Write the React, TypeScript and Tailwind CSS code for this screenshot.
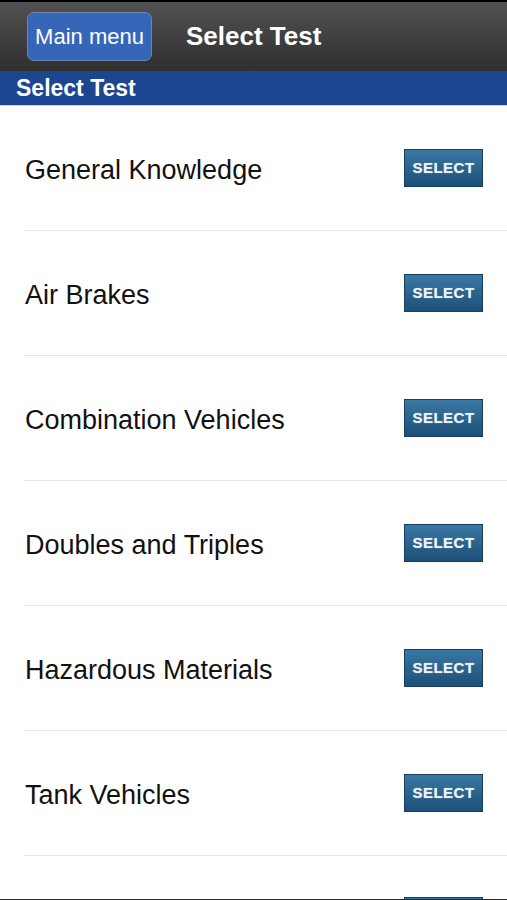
import React from 'react'

const tests = [
  'General Knowledge',
  'Air Brakes',
  'Combination Vehicles',
  'Doubles and Triples',
  'Hazardous Materials',
  'Tank Vehicles',
]

function SelectButton({ label = 'SELECT' }: { label?: string }) {
  return (
    <button className="flex h-[38px] w-[79px] shrink-0 items-center justify-center border border-[#16405f] bg-gradient-to-b from-[#3a78a3] to-[#1c5079] text-[15px] font-bold tracking-[0.5px] text-[#eef2f6] [text-shadow:0_0_1px_rgba(255,255,255,0.6)]">
      {label}
    </button>
  )
}

export default function App() {
  return (
    <div className="flex h-[900px] w-[507px] flex-col overflow-hidden bg-white font-['Liberation_Sans',Arial,sans-serif]">
      <header className="flex h-[71px] shrink-0 items-center border-t-2 border-black bg-gradient-to-b from-[#525252] to-[#2f2f2f] pl-[27px]">
        <button className="flex h-[49px] w-[125px] items-center justify-center rounded-[7px] border border-[#6c86b0] bg-[#3566b8] text-[22px] text-white">
          Main menu
        </button>
        <h1 className="ml-[34px] text-[26px] font-bold text-white">Select Test</h1>
      </header>
      <div className="flex h-[35px] shrink-0 items-center border-b border-[#c9d2e0] bg-[#1e4690] pl-[16px] text-[23px] font-bold text-white">
        Select Test
      </div>
      <ul className="h-[793px] shrink-0 overflow-hidden">
        {tests.map((t) => (
          <li key={t} className="ml-[24px] flex h-[125px] items-center justify-between border-b border-[#e6e6e6] pr-[24px]">
            <span className="pl-[1px] pt-[4px] text-[27px] text-[#111]">{t}</span>
            <SelectButton />
          </li>
        ))}
        <li className="ml-[24px] flex h-[125px] items-start justify-end pr-[24px] pt-[41px]">
          <SelectButton label="" />
        </li>
      </ul>
      <div className="h-[1px] shrink-0 bg-[#2b2b2b]" />
    </div>
  )
}
